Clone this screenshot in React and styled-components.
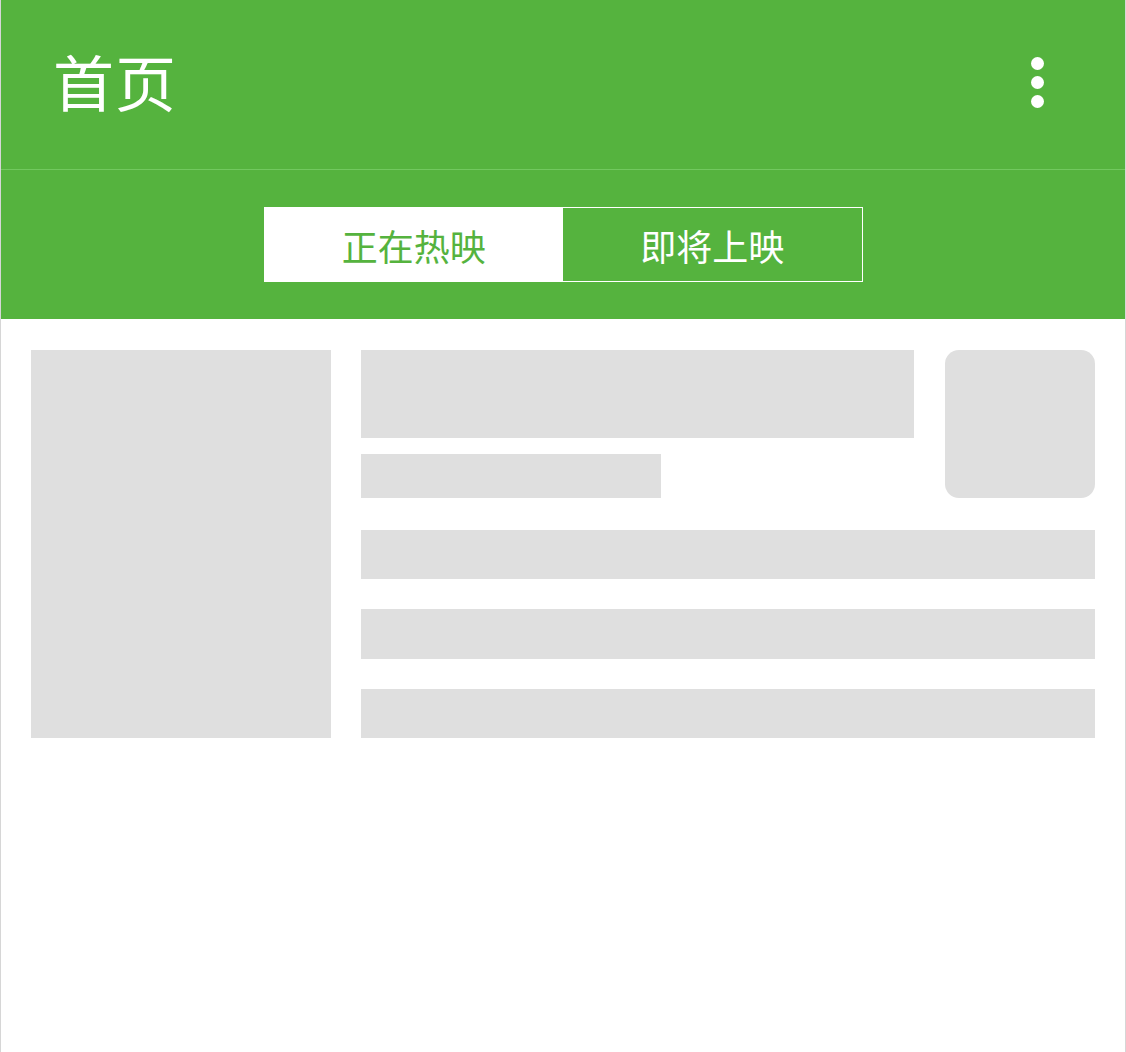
import React from "react";
import styled, { createGlobalStyle } from "styled-components";

const Global = createGlobalStyle`
  html, body { margin: 0; padding: 0; background: #fff; }
  body { font-family: "Noto Sans CJK SC", "Noto Sans", sans-serif; }
`;

const GREEN = "#55b33e";
const SKEL = "#dfdfdf";

const Page = styled.div`
  width: 1126px;
  height: 1052px;
  box-sizing: border-box;
  border-left: 1px solid #d6d6d6;
  border-right: 1px solid #d6d6d6;
  background: #fff;
  display: flex;
  flex-direction: column;
`;

const Toolbar = styled.header`
  height: 169px;
  background: ${GREEN};
  display: flex;
  align-items: center;
  justify-content: space-between;
  padding: 0 81px 0 52px;
  border-bottom: 1px solid #72c85f;
`;

const Title = styled.h1`
  margin: 0;
  color: #fff;
  font-size: 61px;
  font-weight: 400;
  letter-spacing: 1px;
  line-height: 1;
  margin-top: -8px;
`;

const MenuButton = styled.div`
  display: flex;
  flex-direction: column;
  gap: 6px;
  margin-top: -4px;
`;

const Dot = styled.span`
  width: 13px;
  height: 13px;
  border-radius: 50%;
  background: #fff;
`;

const TabBar = styled.div`
  height: 149px;
  background: ${GREEN};
  display: flex;
  align-items: center;
  justify-content: center;
`;

const Segmented = styled.div`
  display: flex;
  width: 599px;
  height: 75px;
  box-sizing: border-box;
  border: 1px solid #fff;
`;

const Segment = styled.div`
  flex: 1;
  display: flex;
  align-items: center;
  justify-content: center;
  font-size: 36px;
  background: ${(p) => (p.$active ? "#fff" : GREEN)};
  color: ${(p) => (p.$active ? GREEN : "#fff")};
`;

const Content = styled.main`
  display: flex;
  gap: 30px;
  padding: 31px 30px 0 30px;
`;

const Poster = styled.div`
  width: 300px;
  height: 388px;
  background: ${SKEL};
  flex-shrink: 0;
`;

const Details = styled.div`
  flex: 1;
  display: flex;
  flex-direction: column;
`;

const TopRow = styled.div`
  display: flex;
  gap: 31px;
`;

const Heading = styled.div`
  flex: 1;
  display: flex;
  flex-direction: column;
  gap: 16px;
`;

const Bar = styled.div`
  background: ${SKEL};
  height: ${(p) => p.$h}px;
  width: ${(p) => p.$w || "100%"};
  margin-top: ${(p) => p.$mt || 0}px;
`;

const Thumb = styled.div`
  width: 150px;
  height: 148px;
  border-radius: 14px;
  background: ${SKEL};
  flex-shrink: 0;
`;

export default function App() {
  return (
    <>
      <Global />
      <Page>
        <Toolbar>
          <Title>首页</Title>
          <MenuButton>
            <Dot />
            <Dot />
            <Dot />
          </MenuButton>
        </Toolbar>
        <TabBar>
          <Segmented>
            <Segment $active>正在热映</Segment>
            <Segment>即将上映</Segment>
          </Segmented>
        </TabBar>
        <Content>
          <Poster />
          <Details>
            <TopRow>
              <Heading>
                <Bar $h={88} />
                <Bar $h={44} $w="300px" />
              </Heading>
              <Thumb />
            </TopRow>
            <Bar $h={49} $mt={32} />
            <Bar $h={50} $mt={30} />
            <Bar $h={49} $mt={30} />
          </Details>
        </Content>
      </Page>
    </>
  );
}
